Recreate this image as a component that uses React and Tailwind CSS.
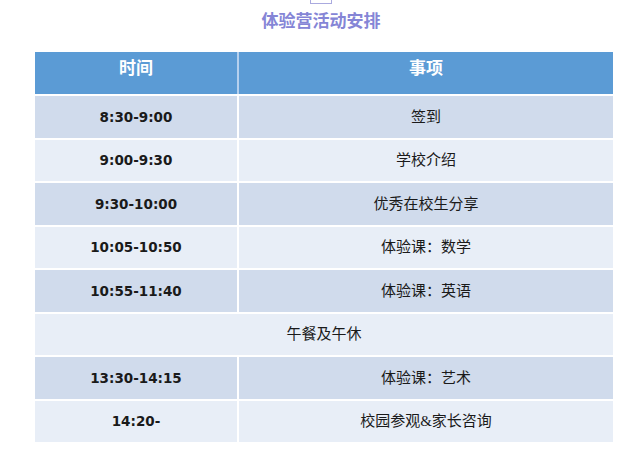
import React from 'react';

const rows = [
  { time: '8:30-9:00', item: '签到' },
  { time: '9:00-9:30', item: '学校介绍' },
  { time: '9:30-10:00', item: '优秀在校生分享' },
  { time: '10:05-10:50', item: '体验课：数学' },
  { time: '10:55-11:40', item: '体验课：英语' },
  { item: '午餐及午休', full: true },
  { time: '13:30-14:15', item: '体验课：艺术' },
  { time: '14:20-', item: '校园参观&家长咨询' },
];

const cjk = { fontFamily: '"Liberation Serif", "Noto Sans CJK SC", serif' };
const num = { fontFamily: '"DejaVu Sans", "Liberation Sans", sans-serif' };

export default function App() {
  return (
    <div className="w-[642px] h-[467px] bg-white overflow-hidden">
      <div className="mx-auto w-[22px] h-[4px] border border-t-0 border-[#aaaadf]" />
      <h1
        className="mt-[4px] text-center text-[17px] leading-[24px] font-bold text-[#8585d6]"
        style={{ fontFamily: '"Noto Sans CJK SC", sans-serif' }}
      >
        体验营活动安排
      </h1>

      <div className="ml-[35px] mt-[20px] w-[578px]">
        <div className="flex h-[42px] leading-[26px] bg-[#5b9bd5] text-white text-[17px] font-bold" style={{ fontFamily: '"Noto Sans CJK SC", sans-serif' }}>
          <div className="w-[202px] flex justify-center pt-[2px]">时间</div>
          <div className="w-[2px] bg-[#b5d0ee]" />
          <div className="flex-1 flex justify-center pt-[2px]">事项</div>
        </div>

        {rows.map((r, i) => (
          <div
            key={i}
            className={`flex h-[43.5px] border-t-2 border-white text-[#1a1a1a] ${i % 2 === 0 ? 'bg-[#d0dbec]' : 'bg-[#e8eef7]'}`}
          >
            {r.full ? (
              <div className="flex-1 flex items-center justify-center text-[15px]" style={cjk}>{r.item}</div>
            ) : (
              <>
                <div className="w-[202px] flex items-center justify-center text-[13.5px] font-bold" style={num}>{r.time}</div>
                <div className="w-[2px] bg-white" />
                <div className="flex-1 flex items-center justify-center text-[15px]" style={cjk}>{r.item}</div>
              </>
            )}
          </div>
        ))}
      </div>
    </div>
  );
}
